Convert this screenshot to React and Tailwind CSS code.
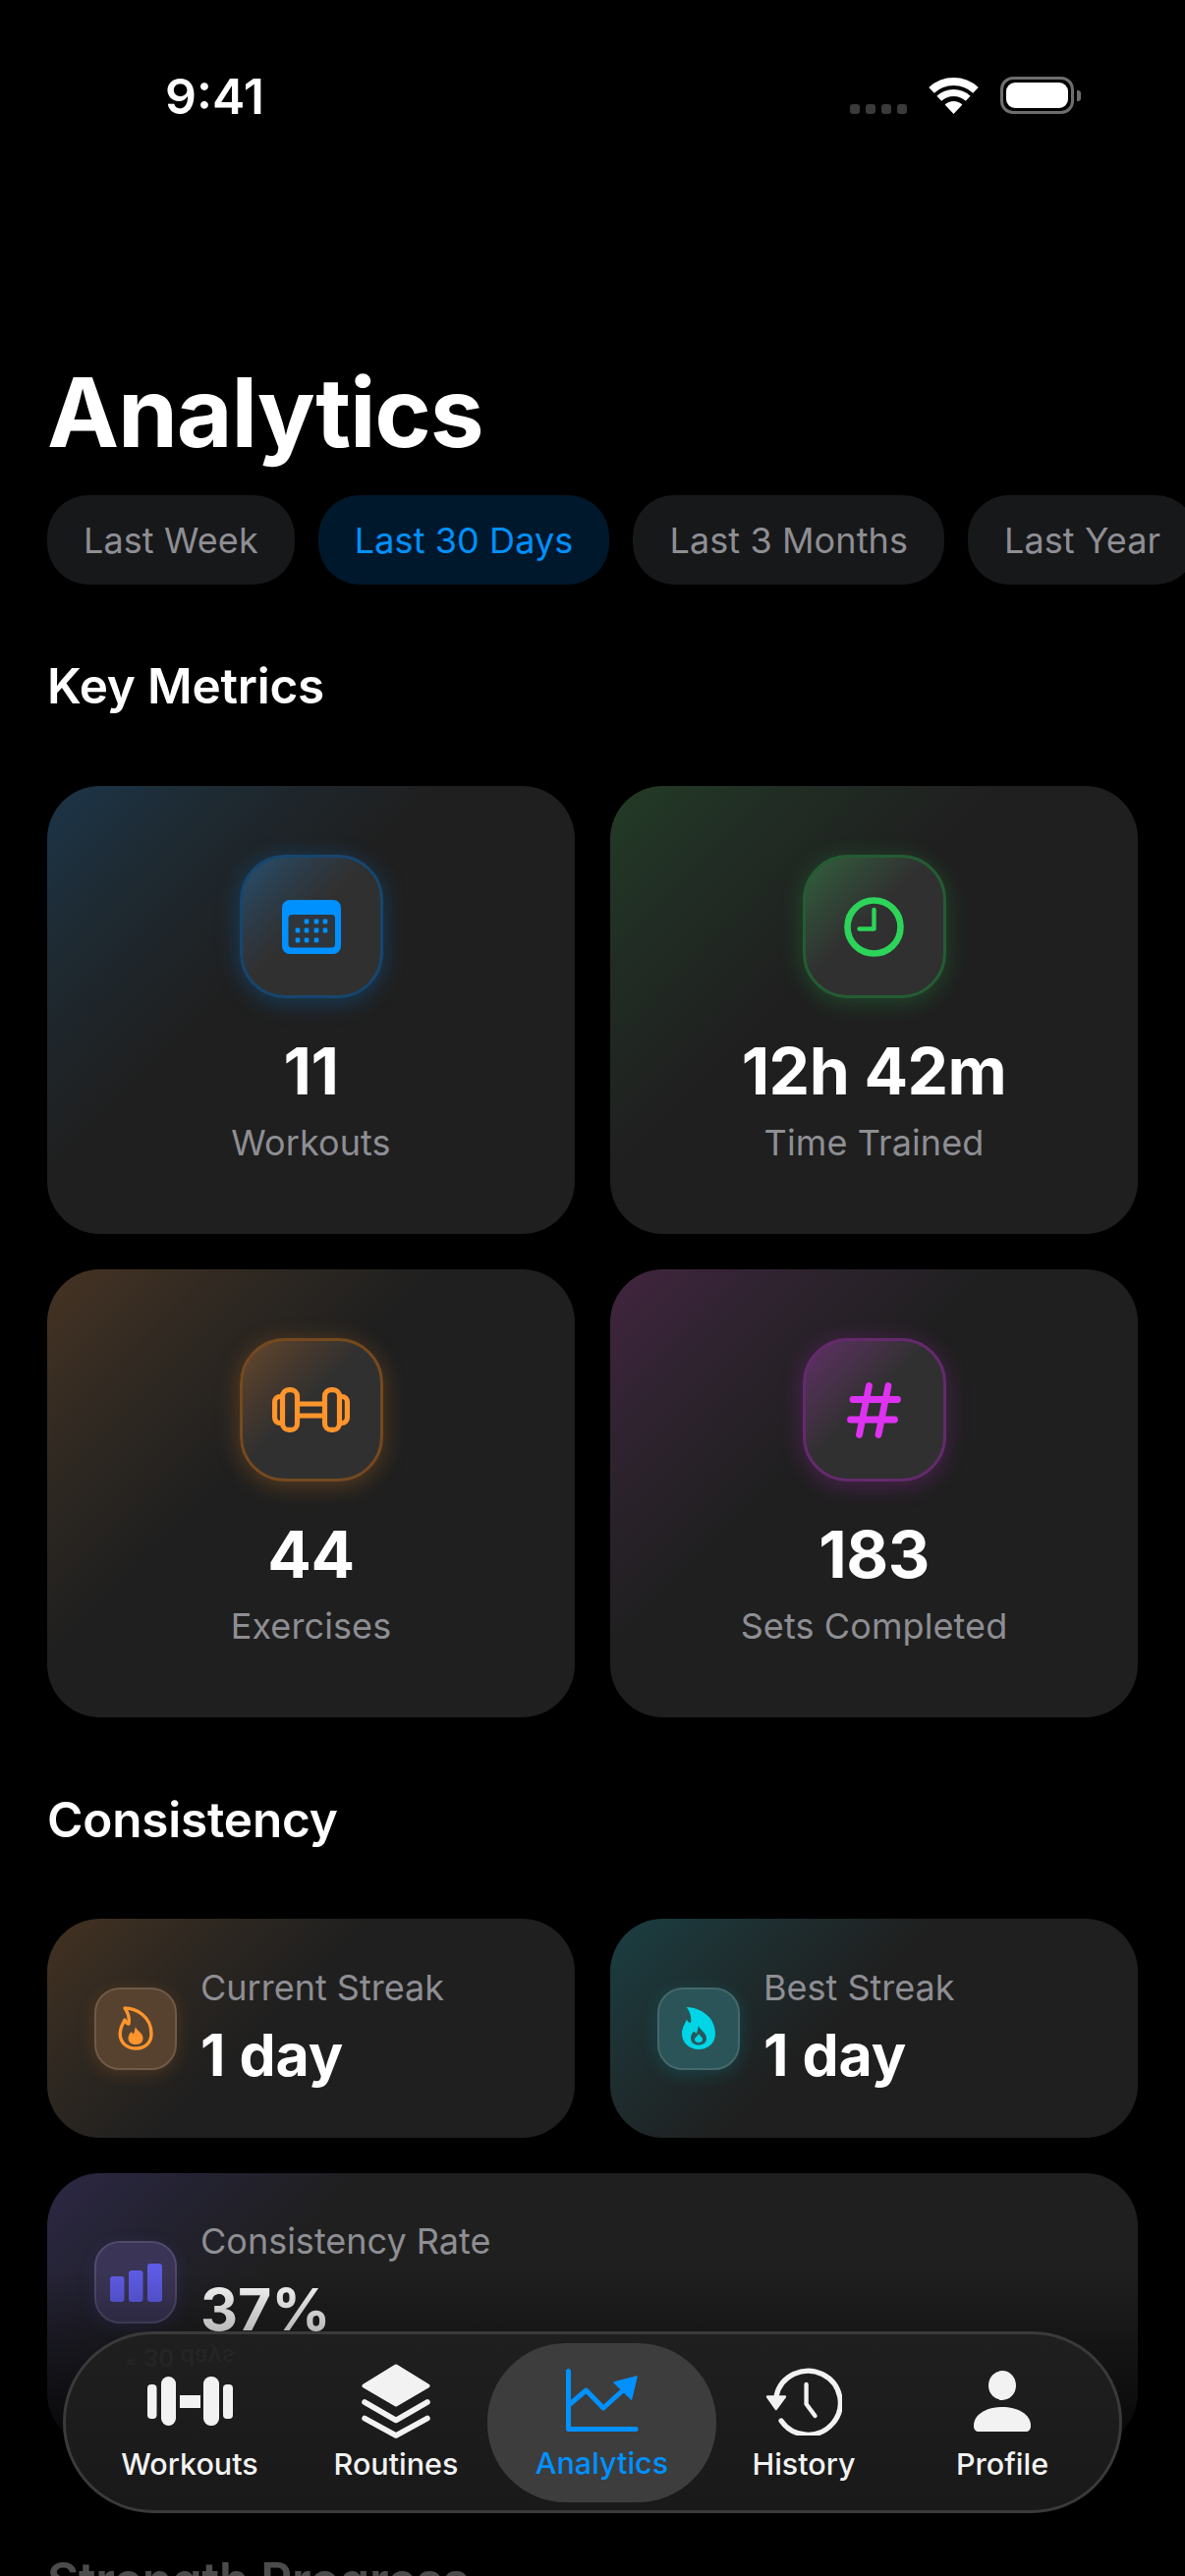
const metrics = [
  {
    value: '11',
    label: 'Workouts',
    card: 'bg-[linear-gradient(135deg,#1c3549_0%,#1e2a32_18%,#1f1f1f_40%)]',
    tile: 'bg-[linear-gradient(135deg,#27506f_0%,#2c3c49_25%,#303030_46%)] border-[#17466e] shadow-[0_4px_24px_rgba(0,145,255,0.28)]',
    icon: <CalendarIcon />,
  },
  {
    value: '12h 42m',
    label: 'Time Trained',
    card: 'bg-[linear-gradient(135deg,#233c26_0%,#212d24_18%,#1f1f1f_40%)]',
    tile: 'bg-[linear-gradient(135deg,#33603d_0%,#314536_25%,#303030_46%)] border-[#245c33] shadow-[0_4px_24px_rgba(48,209,88,0.24)]',
    icon: <ClockIcon />,
  },
  {
    value: '44',
    label: 'Exercises',
    card: 'bg-[linear-gradient(135deg,#463323_0%,#322a22_18%,#1f1f1f_40%)]',
    tile: 'bg-[linear-gradient(135deg,#65482d_0%,#47392d_25%,#303030_46%)] border-[#75491f] shadow-[0_4px_24px_rgba(255,149,44,0.26)]',
    icon: <DumbbellOutline />,
  },
  {
    value: '183',
    label: 'Sets Completed',
    card: 'bg-[linear-gradient(135deg,#42253f_0%,#2f2330_18%,#1f1f1f_40%)]',
    tile: 'bg-[linear-gradient(135deg,#5f2f66_0%,#473149_25%,#303030_46%)] border-[#642a6c] shadow-[0_4px_24px_rgba(222,50,242,0.24)]',
    icon: <HashIcon />,
  },
];

function CalendarIcon() {
  const dots = [
    [302, 938, 0], [311, 938, 1], [321, 938, 1], [330, 938, 1],
    [302, 947, 1], [311, 947, 1], [321, 947, 1], [330, 947, 1],
    [302, 957, 1], [311, 957, 1], [321, 957, 1], [330, 957, 0],
  ];
  return (
    <svg width="60" height="55" viewBox="286 916 60 55">
      <rect x="286" y="916" width="60" height="55" rx="8" fill="#0091ff" />
      <rect x="292.5" y="931" width="47.5" height="33.5" rx="3.5" fill="#2f353a" />
      {dots.filter((d) => d[2]).map((d) => (
        <rect key={`${d[0]}-${d[1]}`} x={d[0] - 2.4} y={d[1] - 2.4} width="4.8" height="4.8" rx="1.3" fill="#0091ff" />
      ))}
    </svg>
  );
}

function ClockIcon() {
  return (
    <svg width="61" height="61" viewBox="0 0 61 61" fill="none" stroke="#2dd45a" strokeLinecap="round" strokeLinejoin="round">
      <circle cx="30.5" cy="30.5" r="27" strokeWidth="6.6" />
      <path d="M30.5 13V32.5H15.5" strokeWidth="4.4" />
    </svg>
  );
}

function DumbbellOutline() {
  return (
    <svg width="79" height="46" viewBox="0 0 79 46" fill="none" stroke="#ff952c" strokeWidth="5.2" strokeLinejoin="round">
      <rect x="10.5" y="2.6" width="15" height="40.8" rx="6.5" />
      <rect x="53.5" y="2.6" width="15" height="40.8" rx="6.5" />
      <path d="M10.5 9.5H8a5.4 5.4 0 0 0-5.4 5.4v16.2a5.4 5.4 0 0 0 5.4 5.4h2.5" />
      <path d="M68.5 9.5H71a5.4 5.4 0 0 1 5.4 5.4v16.2a5.4 5.4 0 0 1-5.4 5.4h-2.5" />
      <path d="M25.5 17H53.5M25.5 29H53.5" />
    </svg>
  );
}

function HashIcon() {
  return (
    <svg width="55" height="57" viewBox="0 0 55 57" fill="none" stroke="#de32f2" strokeWidth="6.8" strokeLinecap="round">
      <path d="M6 17.5H51.5M3.5 38H48.5M22.5 3.5L12.5 53.5M42 3.5L32 53.5" />
    </svg>
  );
}

function FlameOutline() {
  return (
    <svg width="36" height="45" viewBox="0 0 36 45">
      <path d="M7 2C18 2 34 10 34 28C34 38 27 43 18 43C9 43 2.2 37 2.2 28C2.2 22 5 18 7 14C8 16 9 18 11 18C12 12 10 6 7 2Z" fill="none" stroke="#ff952c" strokeWidth="3.4" strokeLinejoin="round" />
      <path d="M18 21C19 25 25.5 27 25.5 32.5C25.5 37 22.5 39 18 39C13.5 39 10.5 36.5 10.5 32.5C10.5 30 12 28 13.5 26C14.5 27 15 28 16 28C17 26 17 23 18 21Z" fill="#ff952c" />
    </svg>
  );
}

function FlameFilled() {
  return (
    <svg width="36" height="45" viewBox="0 0 36 45">
      <path d="M5.5 1C17 1 35 9 35 28C35 38 27 44 18 44C9 44 1 37.5 1 28C1 22 4 18 6 13.5C7 15.5 8 17 10 17C11 11 9 5 5.5 1Z" fill="#00d5e6" />
      <path d="M18 20C19 24 26 27 26 32.5C26 37.5 22.5 39.5 18 39.5C13.5 39.5 10 37 10 32.5C10 30 11.5 27.5 13 25.5C14 26.5 15 27.5 16 27.5C17 25.5 17 22.5 18 20Z" fill="#27565c" />
      <path d="M18 28C19 30 22 31.5 22 34C22 36 20.5 37 18 37C15.5 37 14 36 14 34C14 31.5 17 31 18 28Z" fill="#00d5e6" />
    </svg>
  );
}

function BarsIcon() {
  return (
    <svg width="53" height="39" viewBox="0 0 53 39" fill="#5e5ce6">
      <rect x="0" y="13" width="14.5" height="26" rx="3" />
      <rect x="19" y="7" width="14.5" height="32" rx="3" />
      <rect x="38" y="0" width="15" height="39" rx="3" />
    </svg>
  );
}

function WorkoutsIcon() {
  return (
    <svg width="87" height="50" viewBox="0 0 87 50" fill="#f2f2f2">
      <rect x="0" y="8" width="9.5" height="35" rx="4" />
      <rect x="14" y="0" width="15" height="50" rx="7.5" />
      <rect x="33" y="19" width="21" height="13" />
      <rect x="57" y="0" width="16" height="50" rx="7.5" />
      <rect x="77" y="8" width="10" height="35" rx="4" />
    </svg>
  );
}

function RoutinesIcon() {
  return (
    <svg width="70" height="76" viewBox="0 0 70 76" fill="none" stroke="#f2f2f2" strokeLinejoin="round" strokeLinecap="round">
      <path d="M35 2.5L67.5 22.5L35 41.5L2.5 22.5Z" fill="#f2f2f2" strokeWidth="4" />
      <path d="M3 39L35 57.5L67 39" strokeWidth="5.5" />
      <path d="M3 55.5L35 73L67 55.5" strokeWidth="5.5" />
    </svg>
  );
}

function AnalyticsIcon() {
  return (
    <svg width="74" height="64" viewBox="0 0 74 64" fill="none" stroke="#0091ff" strokeLinecap="round" strokeLinejoin="round">
      <path d="M2.5 2.5V61.5H71" strokeWidth="5" />
      <path d="M4 36L20.5 22L38 40L58 22" strokeWidth="5" />
      <path d="M72 8L49 14L66.5 31Z" fill="#0091ff" strokeWidth="1.5" />
    </svg>
  );
}

function HistoryIcon() {
  return (
    <svg width="78" height="70" viewBox="0 0 78 70" fill="none" stroke="#f2f2f2" strokeLinecap="round" strokeLinejoin="round">
      <path d="M11 30A33 32.5 0 1 1 16 55" strokeWidth="5.2" />
      <path d="M41.6 18V38L50.5 50" strokeWidth="4.4" />
      <path d="M2 30.5H20L10.8 43Z" fill="#f2f2f2" strokeWidth="2.4" />
    </svg>
  );
}

function ProfileIcon() {
  return (
    <svg width="58" height="62" viewBox="0 0 58 62" fill="#f2f2f2">
      <ellipse cx="29" cy="15" rx="14" ry="15" />
      <path d="M0 56C0 44 14 37 29 37C44 37 58 44 58 56C58 60 56 62 53 62H5C2 62 0 60 0 56Z" />
    </svg>
  );
}

function StatusBar() {
  return (
    <div className="h-[360px] relative">
      <div className="flex items-start justify-between pl-[168px] pr-[106px] pt-[68px]">
        <span className="text-[50px] leading-[60px] font-semibold text-white">9:41</span>
        <div className="flex items-start pt-[10px]">
          <div className="flex gap-[6px] mt-[28px] mr-[22px]">
            <div className="w-[10px] h-[10px] rounded-[3px] bg-[#3a3a3a]" />
            <div className="w-[10px] h-[10px] rounded-[3px] bg-[#3a3a3a]" />
            <div className="w-[10px] h-[10px] rounded-[3px] bg-[#3a3a3a]" />
            <div className="w-[10px] h-[10px] rounded-[3px] bg-[#3a3a3a]" />
          </div>
          <svg width="51" height="37" viewBox="0 0 51 37" fill="none" stroke="#fff" className="mt-[1px] mr-[22px]">
            <path d="M3 12.9A33 33 0 0 1 48 12.9" strokeWidth="8" />
            <path d="M10.8 21.3A21.5 21.5 0 0 1 40.2 21.3" strokeWidth="7" />
            <path d="M25.5 37L16.6 27.5A13 13 0 0 1 34.4 27.5Z" fill="#fff" stroke="none" />
          </svg>
          <div className="w-[75px] h-[38px] rounded-[13px] border-[3px] border-[#6e6e6e] p-[3px]">
            <div className="w-full h-full rounded-[9px] bg-white" />
          </div>
          <div className="w-[4px] h-[11px] mt-[14px] ml-[3px] rounded-r-[3px] bg-[#6e6e6e]" />
        </div>
      </div>
    </div>
  );
}

function Pill({ label, active }) {
  return (
    <div className={`shrink-0 h-[91px] px-[37px] flex items-center rounded-[42px] text-[36px] tracking-[0.1px] ${active ? 'bg-[#00182b] text-[#0091ff]' : 'bg-[#17181a] text-[#8e8e93]'}`}>
      {label}
    </div>
  );
}

function MetricCard({ value, label, card, tile, icon }) {
  return (
    <div className={`h-[456px] rounded-[54px] flex flex-col items-center pt-[70px] ${card}`}>
      <div className={`w-[146px] h-[146px] rounded-[46px] border-[3px] flex items-center justify-center ${tile}`}>
        {icon}
      </div>
      <div className="mt-[34px] h-[80px] leading-[80px] text-[66px] font-bold tracking-[-0.5px] text-white">{value}</div>
      <div className="mt-[11px] h-[44px] leading-[44px] text-[36px] tracking-[0.1px] text-[#8e8e93]">{label}</div>
    </div>
  );
}

function StreakCard({ label, value, card, tile, icon }) {
  return (
    <div className={`h-[223px] rounded-[54px] flex items-center pl-[48px] gap-[24px] ${card}`}>
      <div className={`w-[84px] h-[84px] rounded-[26px] border-[2px] flex items-center justify-center ${tile}`}>
        {icon}
      </div>
      <div>
        <div className="h-[44px] leading-[44px] text-[36px] text-[#8e8e93]">{label}</div>
        <div className="mt-[11px] h-[72px] leading-[72px] text-[59px] font-bold text-white">{value}</div>
      </div>
    </div>
  );
}

function TabItem({ label, icon, className }) {
  return (
    <div className={`flex flex-col items-center shrink-0 ${className}`}>
      <div className="h-[80px] flex items-center justify-center">{icon}</div>
      <div className="mt-[4px] h-[40px] leading-[40px] text-[30.5px] font-medium">{label}</div>
    </div>
  );
}

function TabBar() {
  return (
    <div className="absolute left-[64px] top-[2373px] w-[1078px] h-[185px] rounded-[92px] border-[3px] border-[#3a3a3a] bg-[linear-gradient(180deg,#1f1f1f,#191919)] flex items-center pl-[56px] overflow-hidden">
      <div className="absolute left-[26px] top-[36px] text-[38px] leading-[48px] text-[rgba(255,255,255,0.025)] font-semibold">Last 30 days</div>
      <div className="absolute left-[60px] top-[8px] text-[24px] leading-[30px] text-[rgba(255,255,255,0.04)] font-semibold -scale-y-100">* 30 days</div>
      <TabItem label="Workouts" icon={<WorkoutsIcon />} className="relative w-[140px] text-[#f2f2f2]" />
      <TabItem label="Routines" icon={<RoutinesIcon />} className="relative w-[128px] ml-[76px] text-[#f2f2f2]" />
      <TabItem label="Analytics" icon={<AnalyticsIcon />} className="relative w-[233px] h-[162px] pt-[18px] ml-[29px] rounded-[80px] bg-[#3d3d3d] text-[#0091ff]" />
      <TabItem label="History" icon={<HistoryIcon />} className="relative w-[104px] ml-[37px] text-[#f2f2f2]" />
      <TabItem label="Profile" icon={<ProfileIcon />} className="relative w-[94px] ml-[103px] text-[#f2f2f2]" />
    </div>
  );
}

export default function App() {
  return (
    <div className="relative w-[1206px] h-[2622px] overflow-hidden bg-black font-['Inter',sans-serif]">
      <StatusBar />

      <h1 className="pl-[48px] h-[120px] leading-[120px] text-[98px] font-bold tracking-[-1.2px] text-white">Analytics</h1>

      <div className="mt-[24px] pl-[48px] flex gap-[24px]">
        <Pill label="Last Week" />
        <Pill label="Last 30 Days" active />
        <Pill label="Last 3 Months" />
        <Pill label="Last Year" />
      </div>

      <h2 className="mt-[73px] pl-[48px] h-[60px] leading-[60px] text-[49.5px] font-semibold tracking-[-0.2px] text-white">Key Metrics</h2>

      <div className="mt-[72px] px-[48px] grid grid-cols-2 gap-[36px]">
        {metrics.map((m) => (
          <MetricCard key={m.label} {...m} />
        ))}
      </div>

      <h2 className="mt-[74px] pl-[48px] h-[60px] leading-[60px] text-[49.5px] font-semibold tracking-[-0.2px] text-white">Consistency</h2>

      <div className="mt-[71px] px-[48px] grid grid-cols-2 gap-[36px]">
        <StreakCard
          label="Current Streak"
          value="1 day"
          card="bg-[linear-gradient(135deg,#433221_0%,#2f2821_22%,#1f1f1f_44%)]"
          tile="bg-[#574230] border-[#6f5a48] shadow-[0_4px_18px_rgba(255,149,44,0.16)]"
          icon={<FlameOutline />}
        />
        <StreakCard
          label="Best Streak"
          value="1 day"
          card="bg-[linear-gradient(135deg,#1a3f42_0%,#1e2e30_22%,#1f1f1f_44%)]"
          tile="bg-[#2a5458] border-[#44686b] shadow-[0_4px_18px_rgba(0,213,230,0.16)]"
          icon={<FlameFilled />}
        />
        <div className="col-span-2 h-[278px] rounded-[54px] flex items-start pl-[48px] pt-[69px] gap-[24px] bg-[linear-gradient(135deg,#2c2845_0%,#232230_12%,#1f1f1f_24%)]">
          <div className="w-[84px] h-[84px] rounded-[26px] border-[2px] flex items-center justify-center bg-[#3a3556] border-[#504b6c] shadow-[0_4px_18px_rgba(94,92,230,0.14)]">
            <BarsIcon />
          </div>
          <div className="-mt-[22px]">
            <div className="h-[44px] leading-[44px] text-[36px] text-[#8e8e93]">Consistency Rate</div>
            <div className="mt-[12px] h-[72px] leading-[72px] text-[59px] font-bold text-white">37%</div>
          </div>
        </div>
      </div>

      <h2 className="mt-[106px] pl-[48px] h-[60px] leading-[60px] text-[49.5px] font-semibold tracking-[-0.2px] text-white">Strength Progress</h2>

      {/* bottom fade behind the tab bar */}
      <div className="absolute left-0 right-0 top-[2310px] bottom-0 bg-[linear-gradient(180deg,rgba(0,0,0,0)_0%,rgba(0,0,0,0.7)_52%,rgba(0,0,0,0.7)_100%)]" />

      <TabBar />
    </div>
  );
}
